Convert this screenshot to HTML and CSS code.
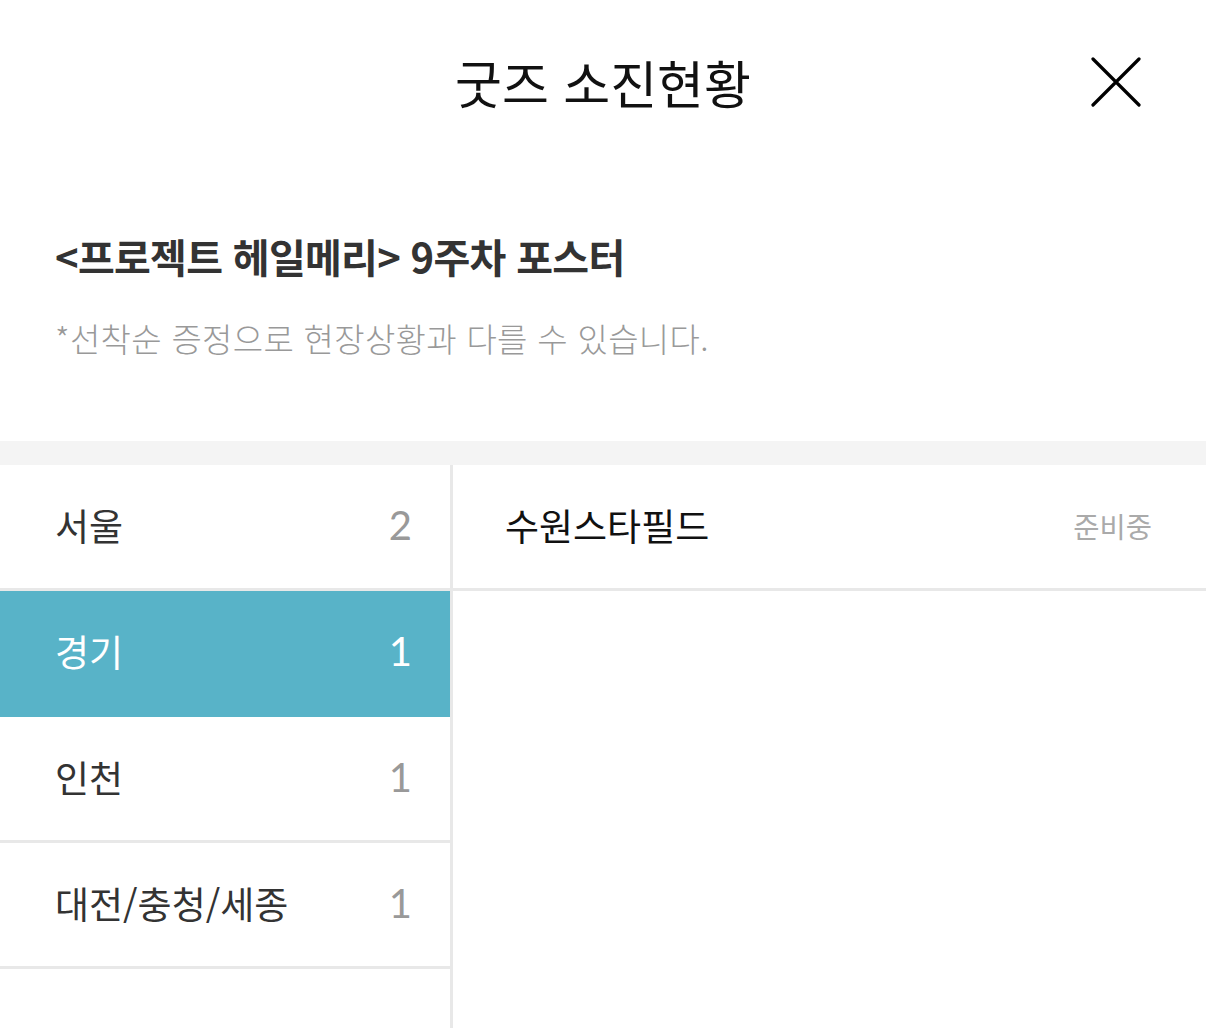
FILE: index.html
```html
<!DOCTYPE html>
<html lang="ko">
<head>
<meta charset="utf-8">
<title>굿즈 소진현황</title>
<link rel="stylesheet" href="styles.css">
</head>
<body>
<div class="page">
  <header class="header">
    <div></div>
    <h1 class="title">굿즈 소진현황</h1>
    <button class="close" aria-label="닫기">
      <svg width="50" height="50" viewBox="0 0 50 50"><path d="M2 2 L48 48 M48 2 L2 48" stroke="#000" stroke-width="3.2" stroke-linecap="round" fill="none"/></svg>
    </button>
  </header>
  <section class="info">
    <h2 class="goods">&lt;프로젝트 헤일메리&gt; 9주차 포스터</h2>
    <p class="note">*선착순 증정으로 현장상황과 다를 수 있습니다.</p>
  </section>
  <div class="band"></div>
  <div class="panel">
    <ul class="regions">
      <li class="region"><span class="rname">서울</span><span class="rcount">2</span></li>
      <li class="region active"><span class="rname">경기</span><span class="rcount">1</span></li>
      <li class="region"><span class="rname">인천</span><span class="rcount">1</span></li>
      <li class="region"><span class="rname">대전/충청/세종</span><span class="rcount">1</span></li>
    </ul>
    <ul class="stores">
      <li class="store"><span class="sname">수원스타필드</span><span class="status">준비중</span></li>
    </ul>
  </div>
</div>
</body>
</html>
```

FILE: styles.css
```css
* { box-sizing: border-box; }
html, body { margin: 0; padding: 0; background: #fff; }
body {
  font-family: Lato, "Noto Sans CJK KR", sans-serif;
  color: #111;
  width: 1206px;
  height: 1028px;
  overflow: hidden;
}
.page { display: flex; flex-direction: column; height: 1028px; }
.header {
  height: 164px;
  display: grid;
  grid-template-columns: 1fr auto 1fr;
  align-items: center;
}
.title {
  margin: 0;
  font-family: "Noto Sans CJK KR", sans-serif;
  font-weight: 400;
  font-size: 51px;
  line-height: 1;
  color: #111;
}
.close {
  justify-self: end;
  margin-right: 65px;
  padding: 0;
  border: 0;
  background: none;
  width: 50px;
  height: 50px;
  display: flex;
}
.info { padding: 67px 55px 83px; }
.goods {
  margin: 0;
  font-family: "Noto Sans CJK KR", sans-serif;
  font-weight: 700;
  font-size: 40px;
  line-height: 50px;
  letter-spacing: -0.7px;
  color: #333;
}
.note {
  margin: 37px 0 0;
  font-family: "Noto Sans CJK KR", sans-serif;
  font-weight: 300;
  font-size: 33px;
  line-height: 40px;
  letter-spacing: 0.3px;
  color: #999;
}
.band { height: 24px; background: #f4f4f4; flex: none; }
.panel { flex: 1; display: flex; }
.regions, .stores { list-style: none; margin: 0; padding: 0; }
.regions { width: 453px; border-right: 3px solid #e8e8e8; flex: none; }
.stores { flex: 1; }
.region {
  height: 126px;
  border-bottom: 3px solid #e8e8e8;
  display: flex;
  align-items: center;
  justify-content: space-between;
  padding: 0 38px 3px 55px;
}
.region.active { background: #58b3c8; border-bottom-color: #58b3c8; }
.rname {
  font-family: "Noto Sans CJK KR", sans-serif;
  font-size: 37px;
  color: #333;
}
.rcount {
  font-family: Lato, sans-serif;
  font-size: 40px;
  color: #999;
}
.region.active .rname, .region.active .rcount { color: #fff; }
.store {
  height: 126px;
  border-bottom: 3px solid #e8e8e8;
  display: flex;
  align-items: center;
  justify-content: space-between;
  padding: 0 54px 3px 52px;
}
.sname {
  font-family: "Noto Sans CJK KR", sans-serif;
  font-size: 37px;
  color: #111;
}
.status {
  font-family: "Noto Sans CJK KR", sans-serif;
  font-size: 28.5px;
  color: #aaa;
}
```
